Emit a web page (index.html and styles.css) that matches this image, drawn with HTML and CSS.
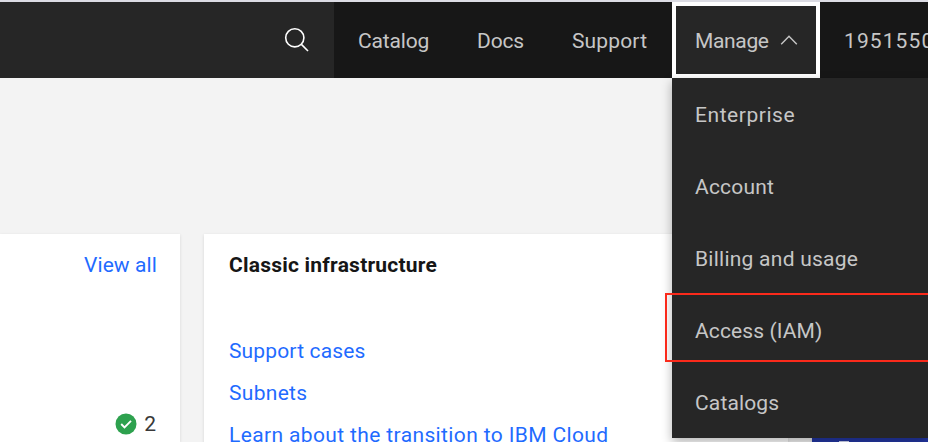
FILE: index.html
```html
<!DOCTYPE html>
<html lang="en">
<head>
<meta charset="utf-8">
<title>Dashboard</title>
<link rel="stylesheet" href="styles.css">
</head>
<body>
<header class="header">
  <div class="search">
    <svg class="search-icon" viewBox="0 0 26 26"><circle cx="10.8" cy="10.8" r="9.1"/><path d="M17.4 17.4 24 24"/></svg>
  </div>
  <nav class="nav">
    <a class="link catalog"><span>Catalog</span></a>
    <a class="link docs"><span>Docs</span></a>
    <a class="link support"><span>Support</span></a>
    <div class="manage">
      <a class="trigger"><span class="manage-label">Manage</span><svg class="chevron" viewBox="0 0 18 12"><path d="M1.2 10.3 9 2.2l7.8 8.1"/></svg></a>
      <ul class="menu">
        <li><span class="enterprise">Enterprise</span></li>
        <li><span class="account">Account</span></li>
        <li><span class="billing">Billing and usage</span></li>
        <li class="marked"><span class="access">Access (IAM)</span></li>
        <li><span class="catalogs">Catalogs</span></li>
      </ul>
    </div>
    <a class="number">1951550</a>
  </nav>
</header>
<main class="board">
  <section class="card status">
    <a class="view-all">View all</a>
    <div class="count">
      <svg class="check" viewBox="0 0 22 22"><circle cx="11" cy="11" r="10.5"/><path d="m6.2 11 3.3 3.3 6.5-6.5"/></svg>
      <span>2</span>
    </div>
  </section>
  <section class="card classic">
    <h2>Classic infrastructure</h2>
    <a class="cases">Support cases</a>
    <a class="subnets">Subnets</a>
    <a class="learn">Learn about the transition to IBM Cloud</a>
  </section>
  <section class="card promo-column"><i></i></section>
</main>
</body>
</html>
```
FILE: styles.css
```css
*, *::before { box-sizing: border-box; }
html { overflow: hidden; }
body {
  margin: 0;
  width: 928px;
  height: 442px;
  overflow: hidden;
  background: #f3f3f3;
  font: 21px/28px Roboto, "Liberation Sans", sans-serif;
  font-weight: 400;
}
a, li, .count span { white-space: nowrap; }
.header {
  display: flex;
  height: 78px;
  border-top: 2px solid #dcdce4;
  background: #171717;
}
.search {
  display: flex;
  justify-content: flex-end;
  flex: none;
  width: 334px;
  padding: 25px 24px 0 0;
  background: #262626;
}
.search-icon { width: 26px; height: 26px; fill: none; stroke: #fff; stroke-width: 1.6; }
.nav { display: flex; flex: none; width: 594px; color: #c6c6c6; }
.nav > * { flex: none; }
.link { padding: 25px 0 0 24px; }
.catalog { width: 119px; letter-spacing: -.15px; }
.docs { width: 95px; letter-spacing: -.15px; }
.support { width: 124px; letter-spacing: .15px; }
.manage { position: relative; width: 148px; }
.trigger {
  display: flex;
  justify-content: space-between;
  width: 148px;
  height: 76px;
  padding: 21px 18px 0 19px;
  border: 4px solid #fff;
  background: #262626;
}
.manage-label { letter-spacing: -.35px; }
.chevron { flex: none; width: 18px; height: 12px; margin-top: 7px; fill: none; stroke: #c6c6c6; stroke-width: 1.4; }
.number { width: 108px; overflow: hidden; padding: 25px 0 0 24px; letter-spacing: 1.1px; }
.menu {
  position: absolute;
  z-index: 2;
  top: 76px;
  left: 0;
  width: 256px;
  height: 360px;
  margin: 0;
  padding: 0;
  list-style: none;
  background: #262626;
  box-shadow: 0 4px 10px rgba(0, 0, 0, .3);
}
.menu li { position: relative; height: 72px; padding: 23px 0 0 23px; }
.enterprise { letter-spacing: .55px; }
.account { letter-spacing: .2px; }
.billing { letter-spacing: .25px; }
.access { letter-spacing: .1px; }
.catalogs { letter-spacing: .15px; }
.marked::before {
  content: "";
  position: absolute;
  top: -1px;
  left: -7px;
  width: 263px;
  height: 69px;
  border: 2px solid #fa2a1b;
  border-right: 0;
}
.board { display: flex; gap: 24px; height: 364px; padding-top: 156px; overflow: hidden; }
.card { flex: none; height: 240px; background: #fff; box-shadow: 0 1px 3px rgba(0, 0, 0, .12); }
.status {
  display: flex;
  flex-direction: column;
  justify-content: space-between;
  align-items: flex-end;
  width: 180px;
  height: 208px;
  padding: 17px 24px 4px 0;
}
.view-all, .classic a { color: #1f6bff; }
.view-all { letter-spacing: .1px; margin-right: -1px; }
.count { display: flex; align-items: center; gap: 7px; color: #393939; }
.check { width: 22px; height: 22px; }
.check circle { fill: #2da14e; }
.check path { fill: none; stroke: #fff; stroke-width: 1.9; }
.classic { display: flex; flex-direction: column; width: 584px; padding: 17px 0 0 25px; }
.classic h2 { margin: 0 0 58px; color: #161616; font-size: 21px; line-height: 28px; font-weight: 700; letter-spacing: .22px; }
.classic a { margin-bottom: 14px; }
.cases { letter-spacing: .15px; }
.subnets { letter-spacing: .3px; }
.learn { letter-spacing: .37px; }
.promo-column { width: 116px; height: 208px; padding: 207px 0 0 27px; background: #2337a4; }
.promo-column i { display: block; width: 10px; height: 1px; background: #d5daf3; }
```
